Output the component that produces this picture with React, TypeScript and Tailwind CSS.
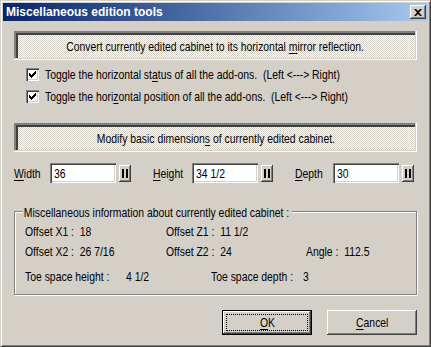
import React from "react";

const font = "font-['Liberation_Sans',Arial,sans-serif]";
const raised = "shadow-[inset_-1px_-1px_#404040,inset_1px_1px_#ffffff,inset_-2px_-2px_#808080]";
const sunken = "shadow-[inset_1px_1px_#808080,inset_2px_2px_#404040,inset_-1px_-1px_#ffffff,inset_-2px_-2px_#d4d0c8]";
const checker =
  "bg-[image:conic-gradient(#d4d0c8_25%,#ffffff_0_50%,#d4d0c8_0_75%,#ffffff_0)] bg-[length:2px_2px]";

// narrow text: the dialog font is an Arial Narrow look-alike
const T = ({ children, center }: { children: React.ReactNode; center?: boolean }) => (
  <span
    className={`inline-block whitespace-pre text-[13px] leading-[15px] scale-x-[0.8] ${center ? "origin-center" : "origin-left"}`}
  >
    {children}
  </span>
);

const U = ({ children }: { children: React.ReactNode }) => <span className="underline underline-offset-2">{children}</span>;

const BigButton = ({ children }: { children: React.ReactNode }) => (
  <div
    className={`h-[29px] flex items-center justify-center text-black ${checker} shadow-[inset_-1px_-1px_#ffffff,inset_-2px_-2px_#d4d0c8,inset_2px_2px_#808080,inset_4px_4px_#404040]`}
  >
    <span className="pt-[1px]">
      <T center>{children}</T>
    </span>
  </div>
);

const Check = ({ children }: { children: React.ReactNode }) => (
  <div className="flex items-center h-[13px] gap-[6px]">
    <div className={`w-[13px] h-[13px] shrink-0 bg-white ${sunken} p-[3px]`}>
      <svg className="block" width="7" height="7" viewBox="0 0 7 7" shapeRendering="crispEdges">
        <path d="M0 2h1v1h1v1h1v-1h1v-1h1v-1h1v-1h1v3h-1v1h-1v1h-1v1h-1v1h-1v-1h-1v-1h-1z" fill="#000" />
      </svg>
    </div>
    <T>{children}</T>
  </div>
);

const Field = ({ label, value, w }: { label: React.ReactNode; value: string; w: string }) => (
  <div className="flex items-center">
    <span className={w}>
      <T>{label}</T>
    </span>
    <div className={`w-[66px] h-[20px] bg-white ${sunken} flex items-center pl-[4px]`}>
      <T>{value}</T>
    </div>
    <div className={`ml-[3px] w-[12px] h-[17px] bg-[#d4d0c8] ${raised} flex items-center justify-center`}>
      <svg className="block" width="6" height="9" viewBox="0 0 6 9" shapeRendering="crispEdges">
        <rect x="0" y="0" width="2" height="9" fill="#000" />
        <rect x="4" y="0" width="2" height="9" fill="#000" />
      </svg>
    </div>
  </div>
);

const Btn = ({ children, def }: { children: React.ReactNode; def?: boolean }) =>
  def ? (
    <div className="w-[90px] h-[25px] border border-black bg-[#d4d0c8] shadow-[inset_-1px_-1px_#404040,inset_1px_1px_#ffffff,inset_-2px_-2px_#808080] p-[3px]">
      <div className="h-full border border-dotted border-black flex items-center justify-center">
        <T center>{children}</T>
      </div>
    </div>
  ) : (
    <div className={`w-[90px] h-[25px] bg-[#d4d0c8] ${raised} flex items-center justify-center`}>
      <T center>{children}</T>
    </div>
  );

export default function App() {
  return (
    <div
      className={`w-[431px] h-[347px] bg-[#d4d0c8] text-black ${font} border-t border-l border-[#d4d0c8] border-r border-b border-r-[#404040] border-b-[#404040] shadow-[inset_1px_1px_#ffffff,inset_-1px_-1px_#808080] p-[2px] overflow-hidden`}
    >
      <div className="h-[18px] flex items-center justify-between bg-gradient-to-r from-[#0a246a] to-[#a6caf0] pl-[3px] pr-[2px]">
        <span className="text-white font-bold text-[12px] leading-none">Miscellaneous edition tools</span>
        <div className={`w-[16px] h-[14px] bg-[#d4d0c8] ${raised} flex items-center justify-center`}>
          <svg width="8" height="7" viewBox="0 0 8 7">
            <path d="M0 0h2l2 2 2-2h2L5 3.5 8 7H6L4 5 2 7H0l3-3.5z" fill="#000" />
          </svg>
        </div>
      </div>

      <div className="px-[11px] pt-[10px]">
        <BigButton>
          Convert currently edited cabinet to its horizontal <U>m</U>irror reflection.
        </BigButton>

        <div className="pl-[12px] pt-[8px] flex flex-col gap-[9px]">
          <Check>
            Toggle the horizontal st<U>a</U>tus of all the add-ons.{"  "}(Left &lt;---&gt; Right)
          </Check>
          <Check>
            Toggle the hori<U>z</U>ontal position of all the add-ons.{"  "}(Left &lt;---&gt; Right)
          </Check>
        </div>

        <div className="pt-[20px]">
          <BigButton>
            Modify basic dimension<U>s</U> of currently edited cabinet.
          </BigButton>
        </div>

        <div className="flex items-center pt-[9px] gap-[22px]">
          <Field label={<><U>W</U>idth</>} value="36" w="w-[36px]" />
          <Field label={<><U>H</U>eight</>} value="34 1/2" w="w-[39px]" />
          <Field label={<><U>D</U>epth</>} value="30" w="w-[38px]" />
        </div>

        <div className="relative mt-[26px] h-[84px] border border-[#808080] shadow-[1px_1px_#ffffff,inset_1px_1px_#ffffff]">
          <span className="absolute left-[8px] -top-[8px] bg-[#d4d0c8] pl-[1px] pr-[3px] scale-x-[0.8] origin-left leading-none">
            <span className="text-[13px] whitespace-nowrap">
              Miscellaneous information about currently edited cabinet :
            </span>
          </span>
          <div className="pl-[10px] pt-[9px] flex flex-col">
            <div className="flex h-[20px] items-center">
              <span className="w-[141px]"><T>{"Offset X1 :  18"}</T></span>
              <T>{"Offset Z1 :  11 1/2"}</T>
            </div>
            <div className="flex h-[20px] items-center">
              <span className="w-[141px]"><T>{"Offset X2 :  26 7/16"}</T></span>
              <span className="w-[140px]"><T>{"Offset Z2 :  24"}</T></span>
              <T>{"Angle :  112.5"}</T>
            </div>
            <div className="flex h-[20px] items-center mt-[5px]">
              <span className="w-[101px]"><T>Toe space height :</T></span>
              <span className="w-[85px]"><T>4 1/2</T></span>
              <span className="w-[92px]"><T>Toe space depth :</T></span>
              <T>3</T>
            </div>
          </div>
        </div>

        <div className="flex justify-end gap-[15px] pt-[15px]">
          <Btn def>
            <U>O</U>K
          </Btn>
          <Btn>
            <U>C</U>ancel
          </Btn>
        </div>
      </div>
    </div>
  );
}
